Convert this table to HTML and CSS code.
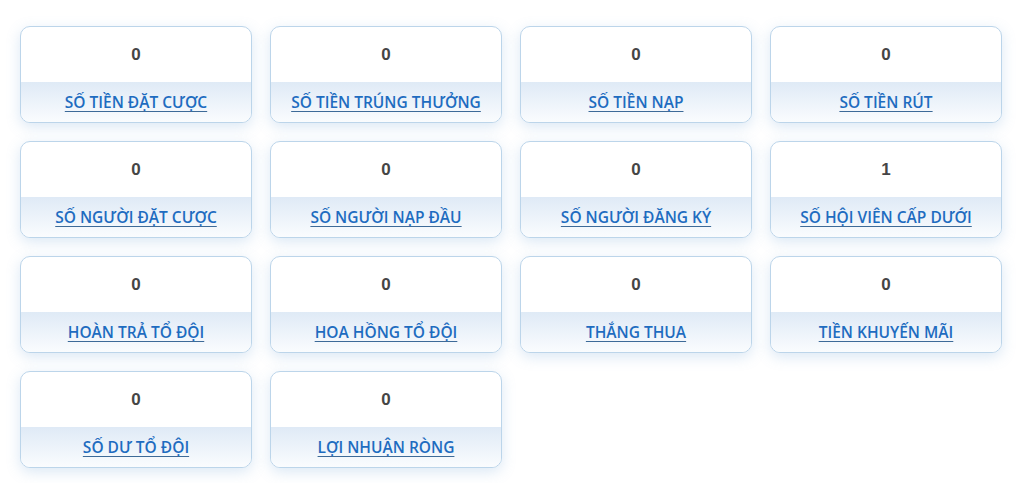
FILE: index.html
```html
<!DOCTYPE html>
<html lang="vi">
<head>
<meta charset="utf-8">
<link rel="stylesheet" href="styles.css">
</head>
<body>
<div class="grid">
  <div class="card"><div class="value">0</div><div class="label"><a href="#">SỐ TIỀN ĐẶT CƯỢC</a></div></div>
  <div class="card"><div class="value">0</div><div class="label"><a href="#">SỐ TIỀN TRÚNG THƯỞNG</a></div></div>
  <div class="card"><div class="value">0</div><div class="label"><a href="#">SỐ TIỀN NẠP</a></div></div>
  <div class="card"><div class="value">0</div><div class="label"><a href="#">SỐ TIỀN RÚT</a></div></div>
  <div class="card"><div class="value">0</div><div class="label"><a href="#">SỐ NGƯỜI ĐẶT CƯỢC</a></div></div>
  <div class="card"><div class="value">0</div><div class="label"><a href="#">SỐ NGƯỜI NẠP ĐẦU</a></div></div>
  <div class="card"><div class="value">0</div><div class="label"><a href="#">SỐ NGƯỜI ĐĂNG KÝ</a></div></div>
  <div class="card"><div class="value">1</div><div class="label"><a href="#">SỐ HỘI VIÊN CẤP DƯỚI</a></div></div>
  <div class="card"><div class="value">0</div><div class="label"><a href="#">HOÀN TRẢ TỔ ĐỘI</a></div></div>
  <div class="card"><div class="value">0</div><div class="label"><a href="#">HOA HỒNG TỔ ĐỘI</a></div></div>
  <div class="card"><div class="value">0</div><div class="label"><a href="#">THẮNG THUA</a></div></div>
  <div class="card"><div class="value">0</div><div class="label"><a href="#">TIỀN KHUYẾN MÃI</a></div></div>
  <div class="card"><div class="value">0</div><div class="label"><a href="#">SỐ DƯ TỔ ĐỘI</a></div></div>
  <div class="card"><div class="value">0</div><div class="label"><a href="#">LỢI NHUẬN RÒNG</a></div></div>
</div>
</body>
</html>
```
FILE: styles.css
```css
html, body {
  margin: 0;
  padding: 0;
  background: #ffffff;
}
body {
  font-family: "Open Sans", "Noto Sans", "Liberation Sans", sans-serif;
}
.grid {
  display: grid;
  grid-template-columns: repeat(4, 232px);
  column-gap: 18px;
  row-gap: 18px;
  padding: 26px 20px;
}
.card {
  height: 97px;
  box-sizing: border-box;
  border: 1px solid #bcd5ea;
  border-radius: 10px;
  overflow: hidden;
  background: #ffffff;
  box-shadow: 0 4px 14px rgba(110, 165, 215, 0.25);
  display: flex;
  flex-direction: column;
}
.value {
  height: 55px;
  display: flex;
  align-items: center;
  justify-content: center;
  font-family: "Liberation Sans", Arial, sans-serif;
  font-weight: bold;
  font-size: 17px;
  color: #454545;
}
.label {
  flex: 1;
  display: flex;
  align-items: center;
  justify-content: center;
  background: linear-gradient(to bottom, #dfeaf6 0%, #fafcfe 100%);
}
.label a {
  font-size: 15.5px;
  font-weight: 600;
  color: #1e6cc0;
  text-decoration: underline;
  text-decoration-color: #3d6a98;
  text-underline-offset: 3px;
}
```
